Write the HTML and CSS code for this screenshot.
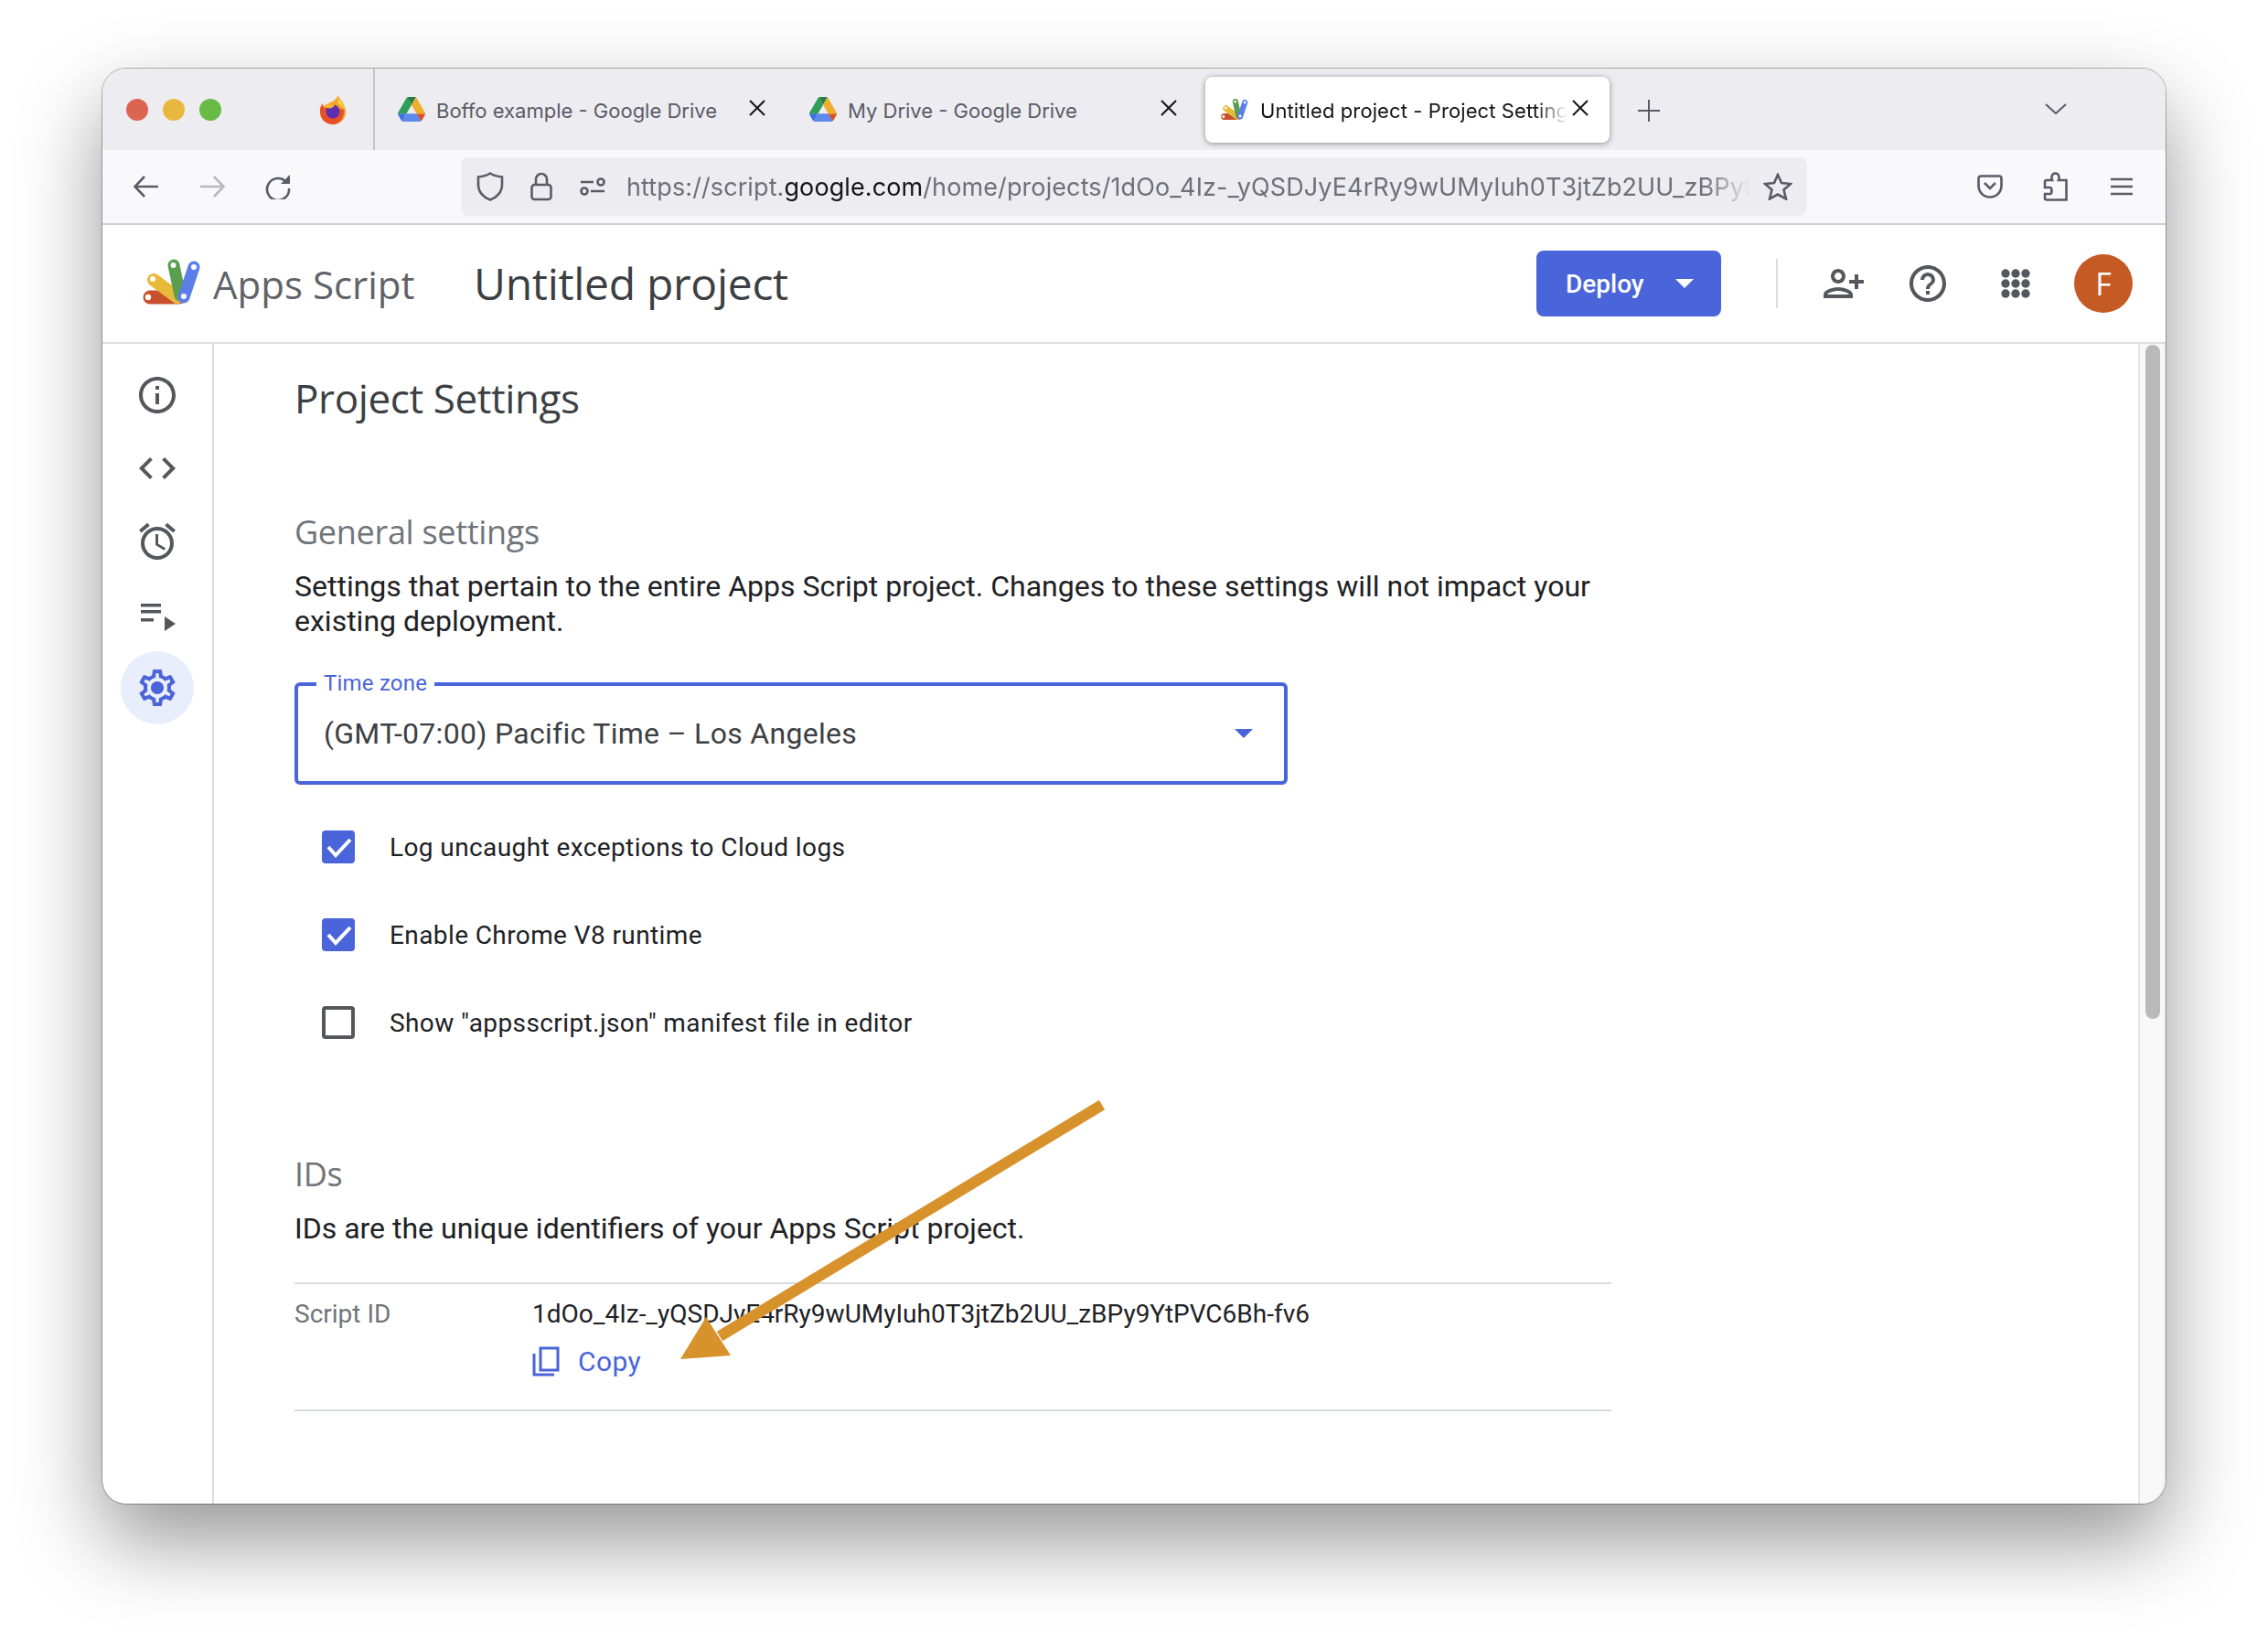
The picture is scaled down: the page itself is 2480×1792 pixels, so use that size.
FILE: index.html
```html
<!DOCTYPE html>
<html>
<head lang="en">
    <meta charset="UTF-8">
    <title>Untitled project - Project Settings</title>
    <link rel="stylesheet" href="styles.css">
</head>
<body>
    <svg width="0" height="0" class="defs">
        <symbol id="drive" viewBox="0 0 87.3 78">
            <path d="m6.6 66.85 3.85 6.65c.8 1.4 1.95 2.5 3.3 3.3l13.75-23.8h-27.5c0 1.55.4 3.1 1.2 4.5z" fill="#3f6fe0"/>
            <path d="m43.65 25-13.75-23.8c-1.35.8-2.5 1.9-3.3 3.3l-25.4 44a9.06 9.06 0 0 0 -1.2 4.5h27.5z" fill="#2f9e58"/>
            <path d="m73.55 76.8c1.35-.8 2.5-1.9 3.3-3.3l1.6-2.75 7.65-13.25c.8-1.4 1.2-2.95 1.2-4.5h-27.502l5.852 11.5z" fill="#d9512c"/>
            <path d="m43.65 25 13.75-23.8c-1.35-.8-2.9-1.2-4.5-1.2h-18.5c-1.6 0-3.15.45-4.5 1.2z" fill="#2b7d45"/>
            <path d="m59.8 53h-32.3l-13.75 23.8c1.35.8 2.9 1.2 4.5 1.2h50.8c1.6 0 3.15-.45 4.5-1.2z" fill="#5f88ec"/>
            <path d="m73.4 26.5-12.7-22c-.8-1.4-1.95-2.5-3.3-3.3l-13.75 23.8 16.15 28h27.45c0-1.55-.4-3.1-1.2-4.5z" fill="#eeb02c"/>
        </symbol>
        <symbol id="apps-logo" viewBox="0 0 64 50">
            <path d="M8 42H40" stroke="#c8502c" stroke-width="15" stroke-linecap="round"/>
            <path d="M12 23L38 42" stroke="#e9b93a" stroke-width="14" stroke-linecap="round"/>
            <path d="M34 7L41 40" stroke="#5a9e50" stroke-width="13" stroke-linecap="round"/>
            <path d="M56 9L45 42" stroke="#5b7ee8" stroke-width="13" stroke-linecap="round"/>
            <circle cx="6" cy="42" r="3.2" fill="#fff"/>
            <circle cx="11" cy="22" r="3" fill="#fff"/>
            <circle cx="33.5" cy="7" r="3" fill="#fff"/>
            <circle cx="56" cy="9" r="3" fill="#fff"/>
            <circle cx="45" cy="41" r="3" fill="#fff"/>
        </symbol>
    </svg>

    <div class="window">
        <div class="tabbar">
            <div class="win-controls">
                <span class="light red"></span>
                <span class="light yellow"></span>
                <span class="light green"></span>
                <svg class="firefox" viewBox="0 0 32 34">
                    <path d="M22 0c1 4 8 9 9 18 1 9-6 16-15 16S0 27 1 18c0-3 1-6 3-8 0 2 1 3 2 4 1-4 6-5 10-7 3-2 5-4 6-7z" fill="#f5a623"/>
                    <path d="M1 18c0-3 1-6 3-8 0 3 2 5 6 5 5 0 14 0 19 2 0 10-5 17-13 17C7 34 1 27 1 18z" fill="#e8502c"/>
                    <path d="M22 3c3 4 7 8 8 14-2-4-5-6-8-7z" fill="#fcd34d"/>
                    <circle cx="16" cy="19" r="8" fill="#5b2fb0"/>
                    <path d="M6 12c3-2 8-2 11-1 2 2-1 3-3 4-3 1-6 0-8-3z" fill="#f7b32b"/>
                </svg>
            </div>
            <div class="tab">
                <svg class="fav"><use href="#drive"/></svg>
                <span class="tab-title">Boffo example - Google Drive</span>
                <svg class="tab-close" viewBox="0 0 18 18"><path d="M1 1L17 17M17 1L1 17"/></svg>
            </div>
            <div class="tab">
                <svg class="fav"><use href="#drive"/></svg>
                <span class="tab-title">My Drive - Google Drive</span>
                <svg class="tab-close" viewBox="0 0 18 18"><path d="M1 1L17 17M17 1L1 17"/></svg>
            </div>
            <div class="tab active">
                <svg class="fav"><use href="#apps-logo"/></svg>
                <span class="tab-title">Untitled project - Project Settings</span>
                <svg class="tab-close" viewBox="0 0 18 18"><path d="M1 1L17 17M17 1L1 17"/></svg>
            </div>
            <svg class="new-tab" viewBox="0 0 24 24"><path d="M12 0V24M0 12H24"/></svg>
            <svg class="all-tabs" viewBox="0 0 24 12"><path d="M1 1L12 11L23 1"/></svg>
        </div>

        <div class="toolbar">
            <div class="nav-btn">
                <svg class="chrome-ico" width="28" height="24" viewBox="0 0 28 24"><path d="M27 12H2M12 1L1.500 12L12 23"/></svg>
            </div>
            <div class="nav-btn">
                <svg class="chrome-ico dim" width="28" height="24" viewBox="0 0 28 24"><path d="M1 12H26M16 1L26.500 12L16 23"/></svg>
            </div>
            <div class="nav-btn">
                <svg class="chrome-ico" width="28" height="28" viewBox="0 0 28 28"><path d="M23 9A12 12 0 1 0 26 16"/><path class="solid" d="M27 1V11H17z"/></svg>
            </div>
            <div class="urlbar">
                <svg class="chrome-ico shield" width="30" height="32" viewBox="0 0 30 32"><path d="M15 1.500C19 4 23 5 28 5.500V14C28 22 22 28 15 30.500C8 28 2 22 2 14V5.500C7 5 11 4 15 1.500z"/></svg>
                <svg class="chrome-ico lock" width="24" height="32" viewBox="0 0 24 32"><path d="M6 14V8A6 6 0 0 1 18 8V14"/><rect x="1.500" y="14" width="21" height="16" rx="3"/></svg>
                <svg class="chrome-ico perm" width="28" height="20" viewBox="0 0 28 20"><path d="M1 5H15M12 15H27"/><circle cx="23" cy="5" r="3.500"/><circle cx="5" cy="15" r="3.500"/></svg>
                <div class="url"><span>https://script.</span><b>google.com</b><span>/home/projects/1dOo_4Iz-_yQSDJyE4rRy9wUMyIuh0T3jtZb2UU_zBPy9YtPVC6Bh-fv6/settings</span></div>
                <svg class="chrome-ico star" width="32" height="30" viewBox="0 0 32 30"><path d="M16 2L20 11L30 12L22.500 18.500L25 28.500L16 23.500L7 28.500L9.500 18.500L2 12L12 11z"/></svg>
            </div>
            <div class="nav-btn first-right">
                <svg class="chrome-ico" width="28" height="26" viewBox="0 0 28 26"><path d="M4 1.500H24A2.500 2.500 0 0 1 26.500 4V12C26.500 19 21 24.500 14 24.500S1.500 19 1.500 12V4A2.500 2.500 0 0 1 4 1.500z"/><path d="M8 9L14 15L20 9"/></svg>
            </div>
            <div class="nav-btn">
                <svg class="chrome-ico" width="28" height="32" viewBox="0 0 28 32"><path d="M4 9H10C9 7 9 1.500 13.500 1.500C18 1.500 18 7 17 9H25.500V30.500H4C2.500 30.500 2 30 2 28.500V24H8C10 24 10 17 8 17H2V11C2 9.500 2.500 9 4 9z"/></svg>
            </div>
            <div class="nav-btn">
                <svg class="chrome-ico" width="24" height="20" viewBox="0 0 24 20"><path d="M0 2H24M0 10H24M0 18H24"/></svg>
            </div>
        </div>

        <header class="app-header">
            <svg class="logo"><use href="#apps-logo"/></svg>
            <span class="app-name">Apps Script</span>
            <span class="project-name">Untitled project</span>
            <div class="deploy">
                <span>Deploy</span>
                <span class="deploy-caret"></span>
            </div>
            <span class="header-div"></span>
            <svg class="gm-ico person" viewBox="0 0 24 24"><path transform="matrix(-1 0 0 1 24 0)" d="M15 12c2.210 0 4-1.790 4-4s-1.790-4-4-4-4 1.790-4 4 1.790 4 4 4zm0-6c1.100 0 2 .9 2 2s-.9 2-2 2-2-.9-2-2 .9-2 2-2zm0 8c-2.670 0-8 1.340-8 4v2h16v-2c0-2.660-5.330-4-8-4zm-6 4c.22-.72 3.310-2 6-2 2.700 0 5.800 1.290 6 2H9zm-3-3v-3h3v-2H6V7H4v3H1v2h3v3h2z"/></svg>
            <svg class="gm-ico help" viewBox="0 0 24 24"><path d="M11 18h2v-2h-2v2zm1-16C6.480 2 2 6.480 2 12s4.480 10 10 10 10-4.480 10-10S17.520 2 12 2zm0 18c-4.410 0-8-3.590-8-8s3.590-8 8-8 8 3.590 8 8-3.590 8-8 8zm0-14c-2.210 0-4 1.790-4 4h2c0-1.100.9-2 2-2s2 .9 2 2c0 2-3 1.750-3 5h2c0-2.250 3-2.500 3-5 0-2.210-1.790-4-4-4z"/></svg>
            <svg class="gm-ico grid" viewBox="0 0 32 32">
                <circle cx="5" cy="5" r="4.700"/><circle cx="16" cy="5" r="4.700"/><circle cx="27" cy="5" r="4.700"/>
                <circle cx="5" cy="16" r="4.700"/><circle cx="16" cy="16" r="4.700"/><circle cx="27" cy="16" r="4.700"/>
                <circle cx="5" cy="27" r="4.700"/><circle cx="16" cy="27" r="4.700"/><circle cx="27" cy="27" r="4.700"/>
            </svg>
            <span class="avatar">F</span>
        </header>

        <div class="main">
            <nav class="sidebar">
                <div class="side-item"><svg viewBox="0 0 24 24"><path d="M11 7h2v2h-2zm0 4h2v6h-2zm1-9C6.480 2 2 6.480 2 12s4.480 10 10 10 10-4.480 10-10S17.520 2 12 2zm0 18c-4.410 0-8-3.590-8-8s3.590-8 8-8 8 3.590 8 8-3.590 8-8 8z"/></svg></div>
                <div class="side-item"><svg viewBox="0 0 24 24"><path d="M9.400 16.600 4.800 12l4.600-4.600L8 6l-6 6 6 6 1.400-1.400zm5.200 0 4.600-4.600-4.600-4.600L16 6l6 6-6 6-1.400-1.400z"/></svg></div>
                <div class="side-item"><svg viewBox="0 0 24 24"><path d="M22 5.720l-4.600-3.860-1.290 1.530 4.600 3.860L22 5.720zM7.880 3.390L6.600 1.860 2 5.710l1.290 1.530 4.590-3.850zM12.500 8H11v6l4.750 2.850.75-1.230-4-2.370V8zM12 4c-4.970 0-9 4.030-9 9s4.030 9 9 9 9-4.030 9-9-4.030-9-9-9zm0 16c-3.870 0-7-3.130-7-7s3.130-7 7-7 7 3.130 7 7-3.130 7-7 7z"/></svg></div>
                <div class="side-item"><svg viewBox="0 0 24 24"><path d="M3 6h11v1.700H3zM3 9.500h11v1.700H3zM3 14h7v1.700H3zM16 13v8l6-4z"/></svg></div>
                <div class="side-item on"><svg viewBox="0 0 24 24"><path d="M19.430 12.980c.04-.32.07-.64.07-.98 0-.34-.03-.66-.07-.98l2.110-1.650c.19-.15.24-.42.12-.64l-2-3.460c-.09-.16-.26-.25-.44-.25-.06 0-.12.01-.17.03l-2.490 1c-.52-.4-1.080-.73-1.690-.98l-.38-2.650C14.460 2.180 14.250 2 14 2h-4c-.25 0-.46.18-.49.42l-.38 2.650c-.61.25-1.170.59-1.690.98l-2.490-1c-.06-.02-.12-.03-.18-.03-.17 0-.34.09-.43.25l-2 3.460c-.13.22-.07.49.12.64l2.110 1.650c-.04.32-.07.65-.07.98 0 .33.03.66.07.98l-2.110 1.650c-.19.15-.24.42-.12.64l2 3.460c.09.16.26.25.44.25.06 0 .12-.01.17-.03l2.490-1c.52.4 1.080.73 1.690.98l.38 2.650c.03.24.24.42.49.42h4c.25 0 .46-.18.49-.42l.38-2.650c.61-.25 1.170-.59 1.690-.98l2.490 1c.06.02.12.03.18.03.17 0 .34-.09.43-.25l2-3.460c.12-.22.07-.49-.12-.64l-2.110-1.650zm-1.980-1.710c.04.31.05.52.05.73 0 .21-.02.43-.05.73l-.14 1.130.89.7 1.080.84-.7 1.210-1.270-.51-1.040-.42-.9.68c-.43.32-.84.56-1.250.73l-1.060.43-.16 1.130-.2 1.350h-1.400l-.19-1.350-.16-1.130-1.060-.43c-.43-.18-.83-.41-1.230-.71l-.91-.7-1.060.43-1.270.51-.7-1.210 1.080-.84.89-.7-.14-1.130c-.03-.31-.05-.54-.05-.74s.02-.43.05-.73l.14-1.130-.89-.7-1.080-.84.7-1.210 1.270.51 1.040.42.9-.68c.43-.32.84-.56 1.250-.73l1.060-.43.16-1.130.2-1.350h1.390l.19 1.350.16 1.130 1.060.43c.43.18.83.41 1.230.71l.91.7 1.060-.43 1.270-.51.7 1.210-1.070.85-.89.7.14 1.130zM12 8.500c-1.930 0-3.500 1.570-3.500 3.500s1.570 3.500 3.500 3.500 3.500-1.570 3.500-3.500-1.570-3.500-3.500-3.500z"/></svg></div>
            </nav>

            <div class="content">
                <h1 class="page-title">Project Settings</h1>

                <h2 class="section-title first">General settings</h2>
                <p class="desc">Settings that pertain to the entire Apps Script project. Changes to these settings will not impact your existing deployment.</p>

                <div class="select">
                    <span class="select-label">Time zone</span>
                    <span class="select-value">(GMT-07:00) Pacific Time – Los Angeles</span>
                    <span class="select-caret"></span>
                </div>

                <div class="checks">
                    <div class="check-row">
                        <span class="check on"><svg viewBox="0 0 36 36"><path d="M7 18L15 27L31 10"/></svg></span>
                        <span>Log uncaught exceptions to Cloud logs</span>
                    </div>
                    <div class="check-row">
                        <span class="check on"><svg viewBox="0 0 36 36"><path d="M7 18L15 27L31 10"/></svg></span>
                        <span>Enable Chrome V8 runtime</span>
                    </div>
                    <div class="check-row">
                        <span class="check"></span>
                        <span>Show "appsscript.json" manifest file in editor</span>
                    </div>
                </div>

                <h2 class="section-title ids">IDs</h2>
                <p class="desc">IDs are the unique identifiers of your Apps Script project.</p>

                <div class="id-table">
                    <span class="id-label">Script ID</span>
                    <div>
                        <div class="id-value">1dOo_4Iz-_yQSDJyE4rRy9wUMyIuh0T3jtZb2UU_zBPy9YtPVC6Bh-fv6</div>
                        <div class="copy">
                            <svg viewBox="0 0 30 33"><path d="M9 2H28V26H9z"/><path d="M2 8V31H24"/></svg>
                            <span>Copy</span>
                        </div>
                    </div>
                </div>
            </div>

            <div class="scrollbar"><div class="thumb"></div></div>
        </div>

        <!-- annotation drawn on top of the screenshot -->
        <svg class="arrow" viewBox="0 0 480 300">
            <path d="M473 13L55 266" stroke="#d8922c" stroke-width="12"/>
            <polygon points="12,291 40,245 67,287" fill="#d8922c"/>
        </svg>
    </div>
</body>
</html>
```

FILE: styles.css
```css
*{
    margin:0;
    padding:0;
    box-sizing:border-box;
}
body{
    width:2480px;
    height:1792px;
    padding:75px 112px 0;
    background:#fff;
    font-family:Roboto,"Liberation Sans",sans-serif;
    overflow:hidden;
}
.defs{
    position:absolute;
}
.window{
    position:relative;
    width:2256px;
    height:1569px;
    border-radius:26px;
    background:#fff;
    display:flex;
    flex-direction:column;
    box-shadow:0 0 0 1px rgba(0,0,0,.28),0 40px 92px rgba(0,0,0,.42);
}

/* tab strip */
.tabbar{
    height:89px;
    display:flex;
    align-items:center;
    background:#edecf1;
    border-radius:26px 26px 0 0;
    font-family:Inter,"Liberation Sans",sans-serif;
}
.win-controls{
    width:298px;
    height:100%;
    padding-left:26px;
    display:flex;
    align-items:center;
    gap:16px;
    border-right:2px solid #c4c4c8;
}
.light{
    width:24px;
    height:24px;
    border-radius:50%;
}
.red{background:#dc6550;}
.yellow{background:#e8b83e;}
.green{background:#69ba46;}
.firefox{
    width:30px;
    height:32px;
    margin-left:91px;
}
.tab{
    width:450px;
    height:72px;
    margin-left:0;
    padding:0 27px 0 21px;
    display:flex;
    align-items:center;
    gap:12px;
    font-size:22px;
    color:#5b5b66;
}
.tab:nth-child(2){
    margin-left:4px;
}
.fav{
    width:30px;
    height:27px;
    flex:none;
}
.tab-title{
    flex:1;
    margin-top:3px;
    white-space:nowrap;
    overflow:hidden;
}
.tab-close{
    width:18px;
    height:18px;
    flex:none;
    stroke:#15141a;
    stroke-width:2;
    margin-top:-4px;
}
.tab.active{
    width:442px;
    margin-left:4px;
    padding:0 23px 0 17px;
    background:#fff;
    color:#15141a;
    border-radius:8px;
    box-shadow:0 1px 6px rgba(0,0,0,.4);
}
.tab.active .fav{
    margin-right:1px;
}
.tab.active .tab-title{
    letter-spacing:.1px;
    -webkit-mask-image:linear-gradient(to right,#000 90%,transparent 100%);
    mask-image:linear-gradient(to right,#000 90%,transparent 100%);
    margin-right:-6px;
}
.new-tab{
    width:24px;
    height:24px;
    margin-left:31px;
    margin-top:2px;
    stroke:#5b5b66;
    stroke-width:2;
}
.all-tabs{
    width:24px;
    height:12px;
    margin-left:auto;
    margin-right:108px;
    margin-top:-2px;
    fill:none;
    stroke:#5b5b66;
    stroke-width:2;
}

/* url toolbar */
.toolbar{
    height:82px;
    flex:none;
    padding:0 0 0 12px;
    display:flex;
    align-items:center;
    background:#f9f9fb;
    border-bottom:2px solid #cfcfd3;
}
.nav-btn{
    width:72px;
    display:flex;
    justify-content:center;
    align-items:center;
}
.chrome-ico{
    fill:none;
    stroke:#5b5b66;
    stroke-width:2.6;
    flex:none;
}
.chrome-ico .solid{
    fill:#5b5b66;
    stroke:none;
}
.chrome-ico.dim{
    stroke:#b9b9be;
}
.urlbar{
    width:1472px;
    height:64px;
    margin-left:164px;
    padding:0 16px 0 17px;
    display:flex;
    align-items:center;
    background:#edecf1;
    border-radius:8px;
}
.lock{
    margin-left:29px;
}
.perm{
    margin-left:30px;
}
.url{
    flex:1;
    margin:0 14px 0 23px;
    white-space:nowrap;
    overflow:hidden;
    font-family:Inter,"Liberation Sans",sans-serif;
    font-size:27px;
    letter-spacing:.1px;
    color:#6f6f78;
    -webkit-mask-image:linear-gradient(to right,#000 96%,transparent 100%);
    mask-image:linear-gradient(to right,#000 96%,transparent 100%);
}
.url b{
    font-weight:400;
    color:#15141a;
}
.first-right{
    margin-left:164px;
}

/* apps script header */
.app-header{
    height:130px;
    flex:none;
    padding:0 36px 0 44px;
    display:flex;
    align-items:center;
    border-bottom:2px solid #dadce0;
}
.logo{
    width:64px;
    height:50px;
    margin-top:-4px;
}
.app-name{
    width:285px;
    margin-left:13px;
    font-family:"Open Sans",sans-serif;
    font-size:42px;
    color:#5f6368;
}
.project-name{
    margin-top:-2px;
    font-family:"Open Sans",sans-serif;
    font-size:48px;
    letter-spacing:-.3px;
    color:#3c4043;
}
.deploy{
    width:202px;
    height:72px;
    margin-left:auto;
    padding:0 0 0 32px;
    display:flex;
    align-items:center;
    background:#4a64da;
    border-radius:8px;
    color:#fff;
    font-size:28px;
    font-weight:500;
}
.deploy-caret{
    width:0;
    height:0;
    margin-left:34px;
    border-left:10px solid transparent;
    border-right:10px solid transparent;
    border-top:10px solid #fff;
}
.header-div{
    width:2px;
    height:54px;
    margin-left:60px;
    background:#dadce0;
}
.gm-ico{
    fill:#55575c;
    flex:none;
}
.person{
    width:48px;
    height:48px;
    margin-left:48px;
}
.help{
    width:48px;
    height:48px;
    margin-left:44px;
}
.grid{
    width:32px;
    height:32px;
    margin-left:56px;
}
.avatar{
    width:64px;
    height:64px;
    margin-left:48px;
    border-radius:50%;
    background:#c55a24;
    color:#fff;
    font-family:"Open Sans",sans-serif;
    font-size:34px;
    line-height:64px;
    text-align:center;
}

/* sidebar + settings */
.main{
    flex:1;
    display:flex;
    min-height:0;
}
.sidebar{
    width:122px;
    flex:none;
    padding-top:16px;
    border-right:2px solid #dadce0;
}
.side-item{
    width:80px;
    height:80px;
    margin-left:20px;
    display:flex;
    align-items:center;
    justify-content:center;
    border-radius:50%;
}
.side-item svg{
    width:48px;
    height:48px;
    fill:#55575c;
}
.side-item.on{
    background:#e8eefc;
}
.side-item.on svg{
    fill:#4a64da;
}
.content{
    flex:1;
    padding:29px 0 0 88px;
}
.page-title{
    height:60px;
    font-family:"Open Sans",sans-serif;
    font-size:44px;
    font-weight:400;
    line-height:60px;
    letter-spacing:-.4px;
    color:#3c4043;
}
.section-title{
    height:44px;
    font-family:"Open Sans",sans-serif;
    font-size:36px;
    font-weight:500;
    line-height:44px;
    letter-spacing:-.3px;
    color:#70757a;
}
.section-title.first{
    margin-top:95px;
}
.section-title.ids{
    margin-top:96px;
}
.desc{
    width:1439px;
    margin-top:18px;
    font-size:32px;
    line-height:38px;
    color:#202124;
}
.select{
    position:relative;
    width:1086px;
    height:112px;
    margin-top:48px;
    padding:0 28px 0 28px;
    display:flex;
    align-items:center;
    justify-content:space-between;
    border:4px solid #4a64da;
    border-radius:6px;
}
.select-label{
    position:absolute;
    left:20px;
    top:-17px;
    padding:0 8px;
    background:#fff;
    font-size:24px;
    line-height:28px;
    letter-spacing:.2px;
    color:#4a64da;
}
.select-value{
    font-size:32px;
    letter-spacing:.3px;
    color:#3c4043;
}
.select-caret{
    width:0;
    height:0;
    margin-right:6px;
    border-left:10px solid transparent;
    border-right:10px solid transparent;
    border-top:10px solid #4a64da;
}
.checks{
    margin-top:20px;
}
.check-row{
    height:96px;
    padding-left:30px;
    display:flex;
    align-items:center;
    gap:38px;
    font-size:28px;
    letter-spacing:.4px;
    color:#202124;
}
.check{
    width:36px;
    height:36px;
    flex:none;
    border:4px solid #55575c;
    border-radius:4px;
}
.check.on{
    border:0;
    background:#4a64da;
}
.check svg{
    display:block;
    fill:none;
    stroke:#fff;
    stroke-width:4;
}
.id-table{
    width:1440px;
    margin-top:40px;
    padding:14px 0 36px;
    display:grid;
    grid-template-columns:260px 1fr;
    border-top:2px solid #dadce0;
    border-bottom:2px solid #dadce0;
    font-size:28px;
    line-height:38px;
}
.id-label{
    color:#70757a;
}
.id-value{
    color:#202124;
}
.copy{
    height:33px;
    margin-top:16px;
    display:flex;
    align-items:center;
    gap:20px;
    font-size:30px;
    letter-spacing:.4px;
    color:#4a64da;
}
.copy svg{
    width:30px;
    height:33px;
    fill:none;
    stroke:#4a64da;
    stroke-width:3;
}
.scrollbar{
    width:30px;
    flex:none;
    padding:1px 0 0 6px;
    background:#f8f8f8;
    border-left:2px solid #e6e6e6;
    border-right:2px solid #eeeeee;
    border-radius:0 0 26px 0;
}
.thumb{
    width:16px;
    height:737px;
    background:#b9b9b9;
    border-radius:8px;
}

/* orange callout */
.arrow{
    position:absolute;
    left:620px;
    top:1120px;
    width:480px;
    height:300px;
}
```
